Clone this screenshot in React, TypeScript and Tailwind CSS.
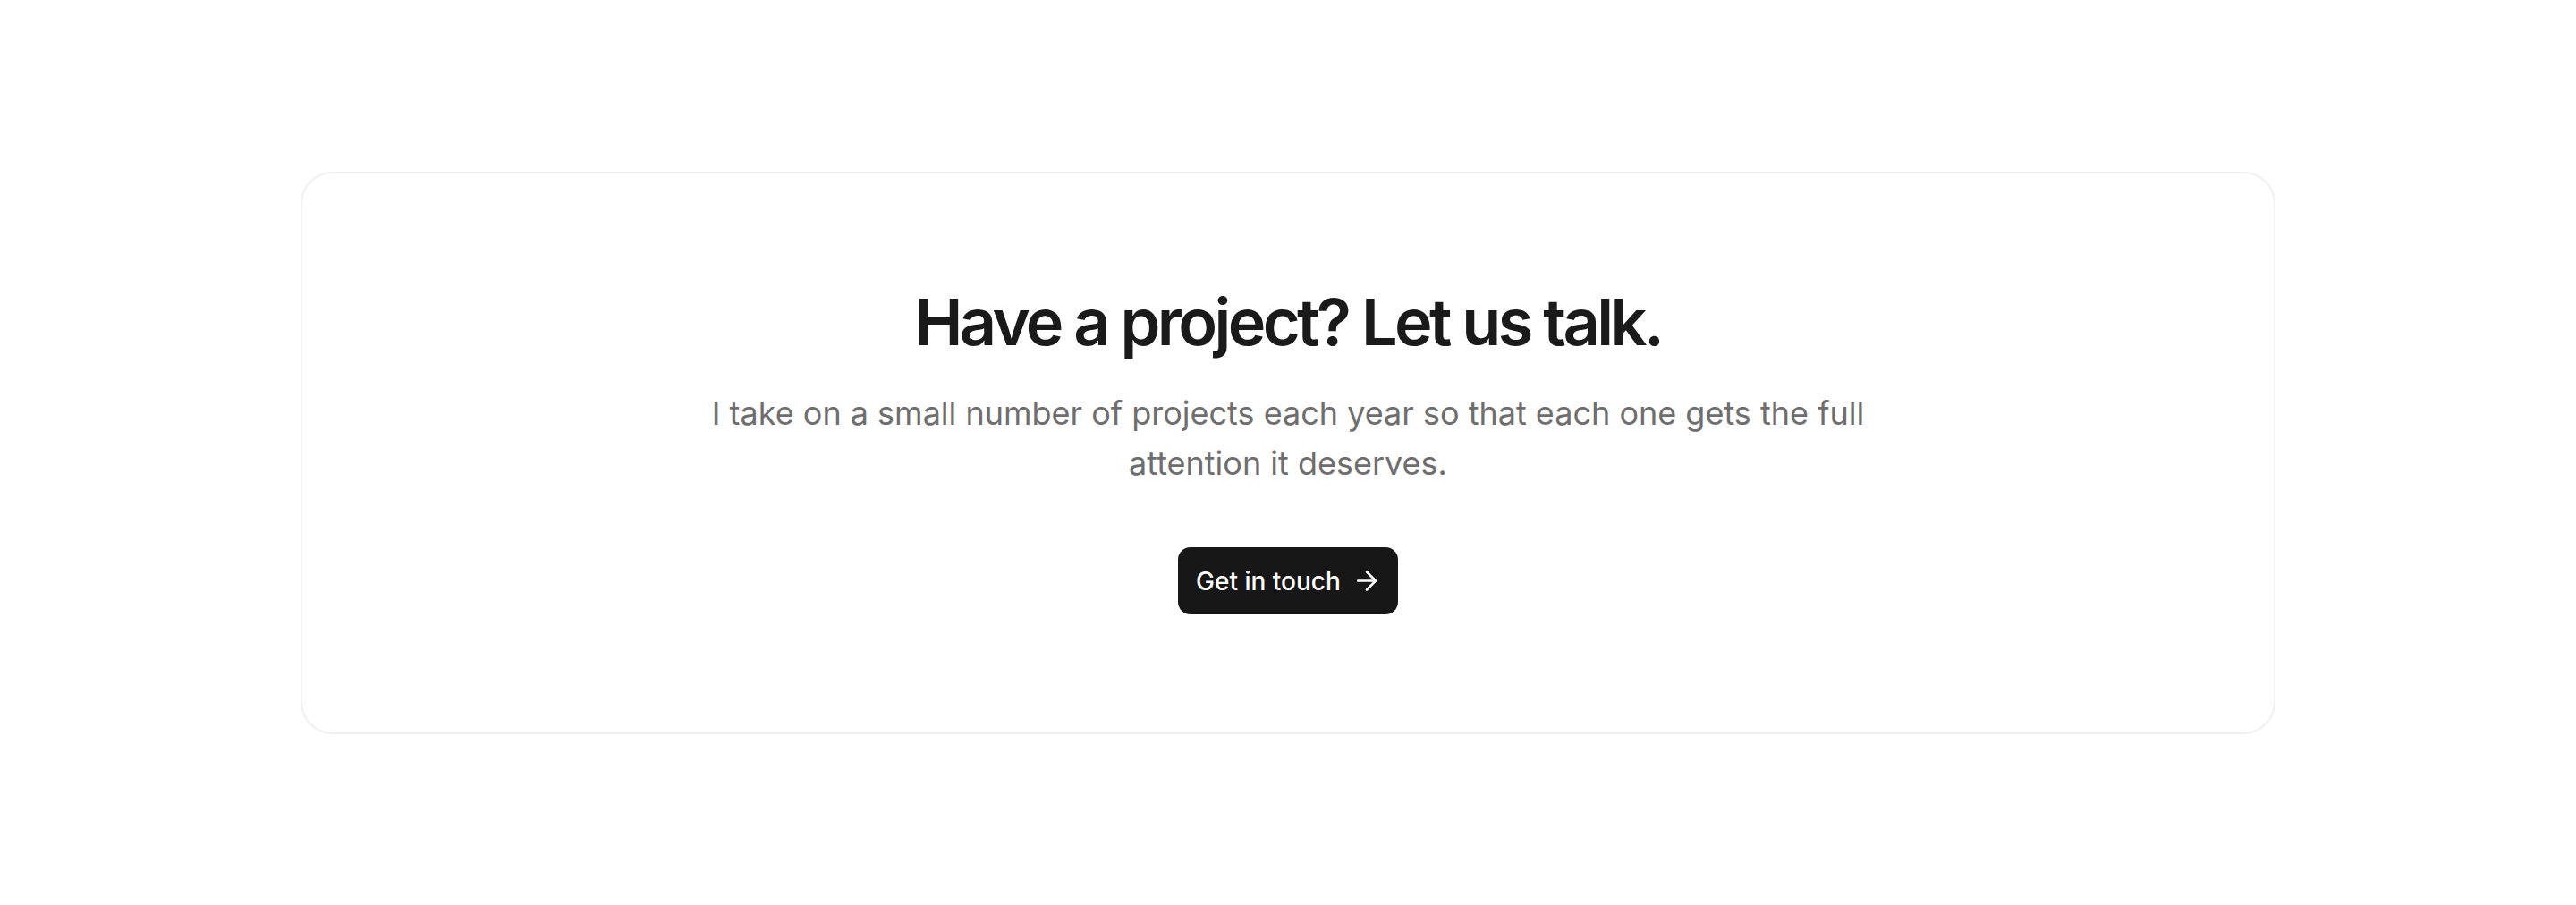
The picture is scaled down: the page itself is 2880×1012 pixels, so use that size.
export default function App() {
  return (
    <div className="min-h-screen bg-white px-[336px] py-[192px] font-['Inter',sans-serif]">
      <div className="rounded-[36px] border-2 border-[#f0f0f0] px-10 pt-[130px] pb-[132px] flex flex-col items-center text-center">
        <h2 className="text-[72px] leading-none font-semibold tracking-[-0.05em] text-[#1a1a1a]">
          Have a project? Let us talk.
        </h2>
        <p className="mt-[38px] max-w-[1400px] text-[36px] leading-[56px] text-[#6e6e6e]">
          I take on a small number of projects each year so that each one gets the full
          <br />
          attention it deserves.
        </p>

        <a
          href="#"
          className="mt-[66px] flex h-[75px] items-center gap-[18px] rounded-[14px] bg-[#171717] pl-5 pr-6 text-[28px] font-medium text-white"
        >
          Get in touch
          <svg width="22" height="23" viewBox="0 0 22 23" fill="none" stroke="currentColor" strokeWidth="2.5" strokeLinecap="round" strokeLinejoin="round">
            <path d="M1 11.5h20M11 1.5l10 10-10 10" />
          </svg>
        </a>
      </div>
    </div>
  );
}
